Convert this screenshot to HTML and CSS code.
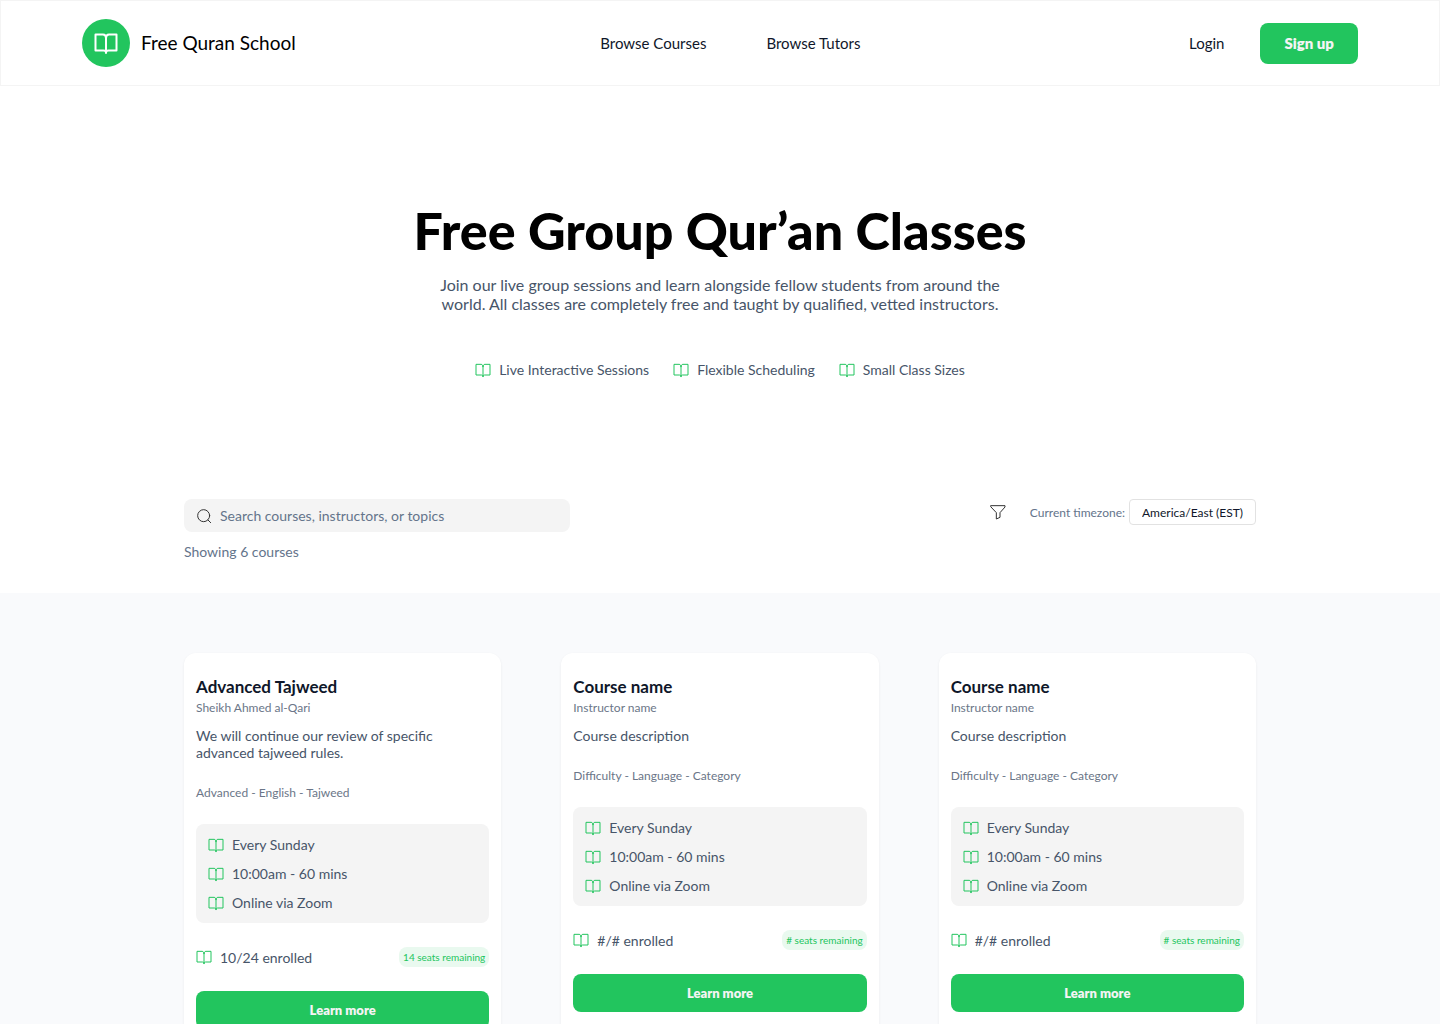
FILE: index.html
```html
<!DOCTYPE html>
<html lang="en">
<head>
    <meta charset="UTF-8">
    <meta name="viewport" content="width=device-width, initial-scale=1.0">
    <title>Free Quran School</title>
    <link rel="stylesheet" href="styles.css">
</head>
<body>
    <svg class="sprite" aria-hidden="true">
        <symbol id="book" viewBox="0 0 24 24">
            <path d="M12 7C12 5 11 3.500 9 3.500H1.500V19.500H9.500C11 19.500 12 20 12 21.500M12 7C12 5 13 3.500 15 3.500H22.500V19.500H14.500C13 19.500 12 20 12 21.500M12 7V22"/>
        </symbol>
    </svg>

    <header>
        <a class="logo" href="#">
            <span class="logo-mark"><svg class="icon"><use href="#book"/></svg></span>
            Free Quran School
        </a>
        <nav>
            <a href="#courses">Browse Courses</a>
            <a href="#tutors">Browse Tutors</a>
        </nav>
        <div class="account">
            <a class="login" href="#login">Login</a>
            <button class="btn signup">Sign up</button>
        </div>
    </header>

    <main>
        <section class="hero">
            <h1>Free Group Qur’an Classes</h1>
            <p>Join our live group sessions and learn alongside fellow students from around the world. All classes are completely free and taught by qualified, vetted instructors.</p>
            <ul class="features">
                <li><svg class="icon"><use href="#book"/></svg>Live Interactive Sessions</li>
                <li><svg class="icon"><use href="#book"/></svg>Flexible Scheduling</li>
                <li><svg class="icon"><use href="#book"/></svg>Small Class Sizes</li>
            </ul>
        </section>

        <section class="toolbar container">
            <div class="search-col">
                <label class="search">
                    <svg class="icon" viewBox="0 0 24 24"><circle cx="11.500" cy="11.500" r="9"/><path d="M18 18L22 22"/></svg>
                    <input type="search" aria-label="Search courses" placeholder="Search courses, instructors, or topics">
                </label>
                <p class="count">Showing 6 courses</p>
            </div>
            <div class="filters">
                <button class="filter-btn" aria-label="Filter">
                    <svg class="icon" viewBox="0 0 24 24"><path d="M1.500 2.500H22.500V4.500L15 13V20L9.500 22.500V13L1.500 4.500Z"/></svg>
                </button>
                <label for="timezone">Current timezone:</label>
                <select id="timezone">
                    <option>America/East (EST)</option>
                </select>
            </div>
        </section>

        <section class="courses" id="courses">
            <div class="container course-grid">
                <article class="card">
                    <h2>Advanced Tajweed</h2>
                    <p class="instructor">Sheikh Ahmed al-Qari</p>
                    <p class="description">We will continue our review of specific advanced tajweed rules.</p>
                    <p class="tags">Advanced - English - Tajweed</p>
                    <ul class="schedule">
                        <li><svg class="icon"><use href="#book"/></svg>Every Sunday</li>
                        <li><svg class="icon"><use href="#book"/></svg>10:00am - 60 mins</li>
                        <li><svg class="icon"><use href="#book"/></svg>Online via Zoom</li>
                    </ul>
                    <div class="enrollment">
                        <span class="enrolled"><svg class="icon"><use href="#book"/></svg>10/24 enrolled</span>
                        <span class="seats">14 seats remaining</span>
                    </div>
                    <button class="btn learn">Learn more</button>
                </article>

                <article class="card">
                    <h2>Course name</h2>
                    <p class="instructor">Instructor name</p>
                    <p class="description">Course description</p>
                    <p class="tags">Difficulty - Language - Category</p>
                    <ul class="schedule">
                        <li><svg class="icon"><use href="#book"/></svg>Every Sunday</li>
                        <li><svg class="icon"><use href="#book"/></svg>10:00am - 60 mins</li>
                        <li><svg class="icon"><use href="#book"/></svg>Online via Zoom</li>
                    </ul>
                    <div class="enrollment">
                        <span class="enrolled"><svg class="icon"><use href="#book"/></svg>#/# enrolled</span>
                        <span class="seats"># seats remaining</span>
                    </div>
                    <button class="btn learn">Learn more</button>
                </article>

                <article class="card">
                    <h2>Course name</h2>
                    <p class="instructor">Instructor name</p>
                    <p class="description">Course description</p>
                    <p class="tags">Difficulty - Language - Category</p>
                    <ul class="schedule">
                        <li><svg class="icon"><use href="#book"/></svg>Every Sunday</li>
                        <li><svg class="icon"><use href="#book"/></svg>10:00am - 60 mins</li>
                        <li><svg class="icon"><use href="#book"/></svg>Online via Zoom</li>
                    </ul>
                    <div class="enrollment">
                        <span class="enrolled"><svg class="icon"><use href="#book"/></svg>#/# enrolled</span>
                        <span class="seats"># seats remaining</span>
                    </div>
                    <button class="btn learn">Learn more</button>
                </article>
            </div>
        </section>
    </main>
</body>
</html>
```
FILE: styles.css
```css
* {
    box-sizing: border-box;
}

body {
    margin: 0;
    font-family: 'Avenir', 'Lato', sans-serif;
    font-size: 14px;
    line-height: 17px;
    color: #475569;
    background-color: #fff;
}

h1, h2, p, ul {
    margin: 0;
    padding: 0;
}

ul {
    list-style: none;
}

a {
    color: #0f172a;
    text-decoration: none;
}

button, input, select {
    font: inherit;
}

button {
    border: none;
    padding: 0;
    cursor: pointer;
}

.sprite {
    display: none;
}

.icon {
    width: 16px;
    height: 16px;
    flex-shrink: 0;
    fill: none;
    stroke: #22c55e;
    stroke-width: 1.5;
    stroke-linejoin: round;
    stroke-linecap: round;
}

.container {
    max-width: 1072px;
    margin: 0 auto;
}

.btn {
    background-color: #22c55e;
    color: #f4f4f4;
    font-weight: 800;
    border-radius: 8px;
}

/* Header */
header {
    display: flex;
    justify-content: space-between;
    align-items: center;
    padding: 18px 81px;
    border: 1px solid #f4f4f4;
}

.logo {
    display: flex;
    align-items: center;
    gap: 11px;
    font-size: 19px;
    line-height: 24px;
    color: #000;
}

.logo-mark {
    display: flex;
    align-items: center;
    justify-content: center;
    width: 48px;
    height: 48px;
    border-radius: 50%;
    background-color: #22c55e;
}

.logo-mark .icon {
    width: 24px;
    height: 24px;
    stroke: #fff;
    stroke-width: 2;
}

nav {
    display: flex;
    gap: 12px;
}

nav a, .login {
    padding: 0 24px;
    font-size: 15px;
    line-height: 20px;
}

.account {
    display: flex;
    align-items: center;
    gap: 12px;
}

.signup {
    padding: 12px 24px;
    font-size: 15px;
}

/* Hero */
.hero {
    display: flex;
    flex-direction: column;
    align-items: center;
    padding: 115px 24px 121px;
    text-align: center;
}

.hero h1 {
    font-size: 52px;
    line-height: 58px;
    font-weight: 900;
    color: #000;
}

.hero p {
    max-width: 592px;
    margin-top: 16px;
    font-size: 16px;
    line-height: 19px;
}

.features {
    display: flex;
    gap: 24px;
    margin-top: 48px;
}

.features li, .schedule li, .enrolled {
    display: flex;
    align-items: center;
    gap: 8px;
}

/* Search and filters */
.toolbar {
    display: flex;
    justify-content: space-between;
    align-items: flex-start;
    padding-bottom: 33px;
    color: #64748b;
}

.search-col {
    width: 36%;
}

.search {
    display: flex;
    align-items: center;
    gap: 8px;
    padding: 8px 12px;
    border-radius: 8px;
    background-color: #f4f4f4;
}

.search input {
    flex: 1;
    min-width: 0;
    height: 17px;
    padding: 0;
    border: none;
    outline: none;
    background: none;
}

.search input::placeholder {
    color: #64748b;
    opacity: 1;
}

.search .icon, .filter-btn .icon {
    stroke: #333;
}

.count {
    margin-top: 11px;
}

.filters {
    display: flex;
    align-items: center;
    font-size: 12px;
}

.filter-btn {
    display: flex;
    margin-right: 24px;
    background: none;
}

.filters select {
    appearance: none;
    height: 26px;
    margin-left: 4px;
    padding: 0 12px;
    border: 1px solid #e2e2e2;
    border-radius: 4px;
    background-color: #fff;
    color: #0f172a;
}

/* Courses */
.courses {
    padding: 60px 24px;
    background-color: #f9fafc;
}

.course-grid {
    display: grid;
    grid-template-columns: repeat(3, 1fr);
    gap: 60px;
    align-items: start;
}

.card {
    display: flex;
    flex-direction: column;
    padding: 24px 12px;
    border-radius: 12px;
    background-color: #fff;
    box-shadow: 0 1px 3px rgba(15, 23, 42, 0.06);
}

.card h2 {
    font-size: 17px;
    line-height: 19px;
    font-weight: 700;
    color: #0f172a;
}

.instructor, .tags {
    font-size: 12px;
    line-height: 15px;
    color: #6b7688;
}

.instructor {
    margin-top: 4px;
}

.description {
    margin-top: 12px;
}

.tags {
    margin-top: 24px;
}

.schedule {
    display: flex;
    flex-direction: column;
    gap: 12px;
    margin-top: 24px;
    padding: 12px;
    border-radius: 8px;
    background-color: #f4f4f4;
}

.enrollment {
    display: flex;
    justify-content: space-between;
    align-items: center;
    margin-top: 24px;
}

.seats {
    padding: 0 4px;
    border-radius: 8px;
    background-color: #e9f9ef;
    color: #22c55e;
    font-size: 10px;
    line-height: 20px;
}

.learn {
    margin-top: 24px;
    padding: 10px;
    font-size: 13px;
    line-height: 18px;
}
```
